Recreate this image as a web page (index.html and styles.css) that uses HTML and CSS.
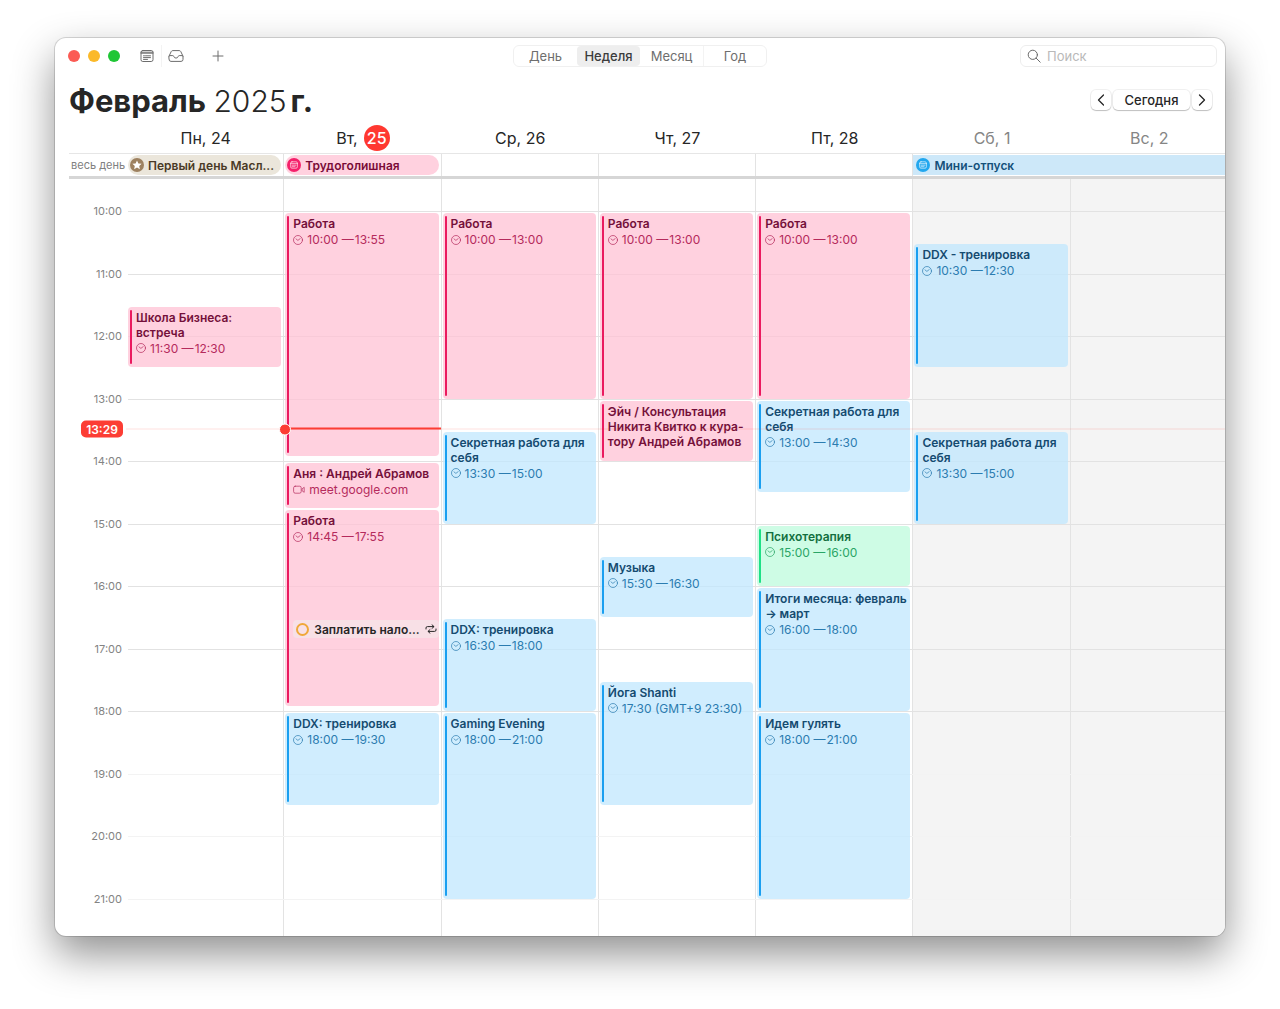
FILE: index.html
```html
<!DOCTYPE html>
<html lang="ru">
<head>
<meta charset="utf-8">
<meta name="viewport" content="width=device-width, initial-scale=1">
<title>Календарь</title>
<link rel="stylesheet" href="styles.css">
</head>
<body>
<svg class="sprite" aria-hidden="true">
  <symbol id="clock" viewBox="0 0 10 10"><circle cx="5" cy="5" r="4.5"/><path d="M3 3.900l1.900 1.500 2.300-1.800"/></symbol>
  <symbol id="video" viewBox="0 0 12 10"><rect x=".6" y="1.2" width="7.6" height="7" rx="1.6"/><path d="M9.4 3.6l1.8-1.3v5l-1.8-1.3z"/></symbol>
  <symbol id="cal" viewBox="0 0 14 14"><circle cx="7" cy="7" r="7"/><rect class="ink" x="3.6" y="3.8" width="6.8" height="6.4" rx="1.4"/><path class="ink" d="M3.6 5.6h6.8M5 7.2h4M5 8.7h3"/></symbol>
</svg>
<main class="window">
  <header class="toolbar">
    <div class="left">
      <div class="lights">
        <button class="light close" aria-label="Закрыть"></button>
        <button class="light minimize" aria-label="Свернуть"></button>
        <button class="light expand" aria-label="Развернуть"></button>
      </div>
      <div class="tools">
        <button class="tool" aria-label="Календари"><svg width="14" height="14" viewBox="0 0 14 14"><rect x="1" y="1.5" width="12" height="11" rx="1.8"/><path d="M1 3.2h12M1 4.2h12M3.5 6.8h1M5.5 6.8h5M3.5 8.6h7M3.5 10.4h4"/></svg></button>
        <button class="tool" aria-label="Входящие"><svg width="16" height="14" viewBox="0 0 16 14"><path d="M1 7.2L3.2 2.6Q3.7 1.6 4.8 1.6h6.4q1.1 0 1.6 1L15 7.2v3.2q0 2-2 2H3q-2 0-2-2zM1 7.2q0-.6.8-.6h3q.7 0 .9.7.6 1.8 2.3 1.8t2.3-1.8q.2-.7.9-.7h3q.8 0 .8.6"/></svg></button>
      </div>
      <button class="tool add" aria-label="Добавить"><svg width="12" height="12" viewBox="0 0 12 12"><path d="M6 1v10M1 6h10"/></svg></button>
    </div>
    <nav class="views" aria-label="Вид">
      <button>День</button><button class="active" aria-pressed="true">Неделя</button><button>Месяц</button><button>Год</button>
    </nav>
    <div class="right">
      <label class="search">
        <svg width="14" height="14" viewBox="0 0 14 14"><circle cx="5.8" cy="5.8" r="4.6"/><path d="M9.2 9.2l4 4"/></svg>
        <input type="text" placeholder="Поиск" aria-label="Поиск">
      </label>
    </div>
  </header>

  <div class="heading">
    <h1>Февраль <span class="year">2025</span><span class="suffix">г.</span></h1>
    <div class="pager">
      <button class="step" aria-label="Назад"><svg width="8" height="12" viewBox="0 0 8 12"><path d="M6.5 1L1.5 6l5 5"/></svg></button>
      <button class="today">Сегодня</button>
      <button class="step" aria-label="Вперёд"><svg width="8" height="12" viewBox="0 0 8 12"><path d="M1.5 1l5 5-5 5"/></svg></button>
    </div>
  </div>

  <div class="week names">
    <span></span>
    <h2>Пн, 24</h2><h2>Вт, <b>25</b></h2><h2>Ср, 26</h2><h2>Чт, 27</h2><h2>Пт, 28</h2><h2 class="off">Сб, 1</h2><h2 class="off">Вс, 2</h2>
  </div>

  <div class="week allday">
    <span class="caption">весь день</span>
    <div class="cell first"><div class="pill sand"><svg width="14" height="14" viewBox="0 0 14 14"><circle cx="7" cy="7" r="7"/><path class="star" d="M7 2.4l1.4 3 3.2.4-2.4 2.2.7 3.2L7 9.6l-2.9 1.6.7-3.2-2.4-2.2 3.2-.4z"/></svg><span>Первый день Масл...</span></div></div>
    <div class="cell"><div class="pill pink"><svg width="14" height="14"><use href="#cal"/></svg><span>Трудоголишная</span></div></div>
    <div class="cell"></div><div class="cell"></div><div class="cell"></div>
    <div class="cell double"><div class="pill blue"><svg width="14" height="14"><use href="#cal"/></svg><span>Мини-отпуск</span></div></div>
  </div>

  <div class="week schedule">
    <div class="hours">
      <time style="--at:6">10:00</time><time style="--at:18">11:00</time><time style="--at:30">12:00</time><time style="--at:42">13:00</time><time style="--at:54">14:00</time><time style="--at:66">15:00</time><time style="--at:78">16:00</time><time style="--at:90">17:00</time><time style="--at:102">18:00</time><time style="--at:114">19:00</time><time style="--at:126">20:00</time><time style="--at:138">21:00</time>
    </div>
    <div class="lines">
      <i style="--at:6"></i><i style="--at:18"></i><i style="--at:30"></i><i style="--at:42"></i><i style="--at:54"></i><i style="--at:66"></i><i style="--at:78"></i><i style="--at:90"></i><i style="--at:102"></i><i class="faint" style="--at:114"></i><i class="faint" style="--at:126"></i><i class="faint" style="--at:138"></i>
    </div>

    <section class="day first">
      <article class="event pink" style="--from:24;--to:36"><h3>Школа Бизнеса: встреча</h3><p><svg class="icon"><use href="#clock"/></svg>11:30 —&#8202;12:30</p></article>
    </section>
    <section class="day">
      <article class="event pink" style="--from:6;--to:53"><h3>Работа</h3><p><svg class="icon"><use href="#clock"/></svg>10:00 —&#8202;13:55</p></article>
      <article class="event pink" style="--from:54;--to:63"><h3>Аня : Андрей Абрамов</h3><p><svg class="icon wide"><use href="#video"/></svg>meet.google.com</p></article>
      <article class="event pink" style="--from:63;--to:101"><h3>Работа</h3><p><svg class="icon"><use href="#clock"/></svg>14:45 —&#8202;17:55</p></article>
      <div class="reminder" style="--from:84;--to:88"><span class="ring"></span><span class="text">Заплатить нало...</span><svg width="12" height="10" viewBox="0 0 12 10"><path d="M1 5V4q0-1.400 1.400-1.400h6.400M7 .8l2 1.800-2 1.800M11 5v1q0 1.400-1.400 1.400H3.200M5 5.600L3 7.400l2 1.800"/></svg></div>
      <article class="event blue" style="--from:102;--to:120"><h3>DDX: тренировка</h3><p><svg class="icon"><use href="#clock"/></svg>18:00 —&#8202;19:30</p></article>
    </section>
    <section class="day">
      <article class="event pink" style="--from:6;--to:42"><h3>Работа</h3><p><svg class="icon"><use href="#clock"/></svg>10:00 —&#8202;13:00</p></article>
      <article class="event blue" style="--from:48;--to:66"><h3>Секретная работа для себя</h3><p><svg class="icon"><use href="#clock"/></svg>13:30 —&#8202;15:00</p></article>
      <article class="event blue" style="--from:84;--to:102"><h3>DDX: тренировка</h3><p><svg class="icon"><use href="#clock"/></svg>16:30 —&#8202;18:00</p></article>
      <article class="event blue" style="--from:102;--to:138"><h3>Gaming Evening</h3><p><svg class="icon"><use href="#clock"/></svg>18:00 —&#8202;21:00</p></article>
    </section>
    <section class="day">
      <article class="event pink" style="--from:6;--to:42"><h3>Работа</h3><p><svg class="icon"><use href="#clock"/></svg>10:00 —&#8202;13:00</p></article>
      <article class="event pink" style="--from:42;--to:54"><h3>Эйч / Консультация Никита Квитко к кура-<br>тору Андрей Абрамов</h3></article>
      <article class="event blue" style="--from:72;--to:84"><h3>Музыка</h3><p><svg class="icon"><use href="#clock"/></svg>15:30 —&#8202;16:30</p></article>
      <article class="event blue" style="--from:96;--to:120"><h3>Йога Shanti</h3><p><svg class="icon"><use href="#clock"/></svg>17:30 (GMT+9 23:30)</p></article>
    </section>
    <section class="day">
      <article class="event pink" style="--from:6;--to:42"><h3>Работа</h3><p><svg class="icon"><use href="#clock"/></svg>10:00 —&#8202;13:00</p></article>
      <article class="event blue" style="--from:42;--to:60"><h3>Секретная работа для себя</h3><p><svg class="icon"><use href="#clock"/></svg>13:00 —&#8202;14:30</p></article>
      <article class="event green" style="--from:66;--to:78"><h3>Психотерапия</h3><p><svg class="icon"><use href="#clock"/></svg>15:00 —&#8202;16:00</p></article>
      <article class="event blue" style="--from:78;--to:102"><h3>Итоги месяца: февраль → март</h3><p><svg class="icon"><use href="#clock"/></svg>16:00 —&#8202;18:00</p></article>
      <article class="event blue" style="--from:102;--to:138"><h3>Идем гулять</h3><p><svg class="icon"><use href="#clock"/></svg>18:00 —&#8202;21:00</p></article>
    </section>
    <section class="day weekend">
      <article class="event blue" style="--from:12;--to:36"><h3>DDX - тренировка</h3><p><svg class="icon"><use href="#clock"/></svg>10:30 —&#8202;12:30</p></article>
      <article class="event blue" style="--from:48;--to:66"><h3>Секретная работа для себя</h3><p><svg class="icon"><use href="#clock"/></svg>13:30 —&#8202;15:00</p></article>
    </section>
    <section class="day weekend"></section>

    <div class="week now" style="top:33%"><time>13:29</time><span class="marker"></span></div>
  </div>
</main>
</body>
</html>
```
FILE: styles.css
```css
* { box-sizing: border-box; }

body {
  margin: 0;
  min-height: 100vh;
  display: flex;
  padding: 38px 55px 73px;
  background: #fff;
  color: #262626;
  font-family: Inter, "Liberation Sans", sans-serif;
}

h1, h2, h3, p { margin: 0; }

button, input {
  font: inherit;
  color: inherit;
  background: none;
  border: 0;
  padding: 0;
}

svg {
  flex: none;
  fill: none;
  stroke: currentColor;
  stroke-linecap: round;
  stroke-linejoin: round;
}

.sprite { position: absolute; width: 0; height: 0; }

.window {
  flex: 1;
  min-width: 0;
  display: flex;
  flex-direction: column;
  overflow: hidden;
  border-radius: 11px;
  background: #fff;
  box-shadow: 0 0 0 1px rgba(0, 0, 0, .14), 0 18px 42px rgba(0, 0, 0, .44);
}

/* toolbar */
.toolbar {
  display: grid;
  grid-template-columns: 1fr auto 1fr;
  align-items: center;
  height: 36px;
  padding: 0 8px;
}

.left, .lights, .tools { display: flex; align-items: center; }
.left { padding-left: 5px; }
.lights { gap: 8px; }

.light { width: 12px; height: 12px; border-radius: 50%; }
.close { background: #fb5b54; }
.minimize { background: #fbb929; }
.expand { background: #1fc635; }

.tools { margin-left: 12px; }
.tool { width: 29px; height: 22px; display: grid; place-items: center; color: #6d6d6d; }
.tool + .tool { border-left: 1px solid #f3f3f3; }
.add { margin-left: 13px; }

.views {
  display: grid;
  grid-template-columns: repeat(4, 1fr);
  width: 254px;
  height: 22px;
  border: 1px solid #f0f0f0;
  border-radius: 6px;
  font-size: 13px;
  line-height: 20px;
  color: #6e6e6e;
}
.views .active { background: #eee; color: #3c3c3c; font-weight: 500; border-radius: 4px; }
.views button:last-child { border-left: 1px solid #f3f3f3; }

.right { display: flex; justify-content: flex-end; }

.search {
  display: flex;
  align-items: center;
  gap: 6px;
  width: 197px;
  height: 22px;
  padding: 0 6px;
  border: 1px solid #ededed;
  border-radius: 6px;
  color: #6a6a6a;
}
.search input { flex: 1; min-width: 0; outline: 0; font-size: 13px; line-height: 20px; }
.search input::placeholder { color: #b9b9b9; opacity: 1; }

/* month heading */
.heading {
  display: flex;
  justify-content: space-between;
  align-items: center;
  height: 49px;
  padding: 5px 13px 0 14px;
}
h1 { font-size: 31px; line-height: 40px; font-weight: 700; }
.year { font-size: 30px; font-weight: 300; }
.suffix { margin-left: 4px; }

.pager { display: flex; gap: 2px; margin-bottom: 2px; font-size: 13px; font-weight: 500; line-height: 20px; }
.pager button {
  height: 20px;
  border-radius: 5px;
  background: #fff;
  box-shadow: 0 0 0 1px rgba(0, 0, 0, .06), 0 1px 1px rgba(0, 0, 0, .2);
}
.step { width: 20px; display: grid; place-items: center; }
.step svg { stroke-width: 1.3; }
.today { width: 77px; }

/* week layout: gutter and seven days */
.week {
  display: grid;
  grid-template-columns: 71px repeat(7, minmax(0, 1fr));
  margin-right: -2px;
}

.names { height: 30px; padding-bottom: 1px; }
h2 {
  display: flex;
  justify-content: center;
  align-items: center;
  gap: 6px;
  padding-left: 2px;
  font-size: 16px;
  font-weight: 400;
}
h2 b {
  width: 26px;
  line-height: 26px;
  border-radius: 50%;
  background: #ff3830;
  color: #fff;
  font-weight: 500;
  text-align: center;
}
.off { color: #858585; }

.allday {
  height: 26px;
  border-bottom: 3px solid #d6d6d6;
  border-top: 1px solid #e6e6e6;
  margin-left: 14px;
  grid-template-columns: 57px repeat(7, minmax(0, 1fr));
}
.caption { color: #808080; font-size: 11px; line-height: 22px; padding-left: 2px; white-space: nowrap; }
.cell { padding: 1px 2px 1px 1px; border-left: 1px solid #e3e3e3; }
.cell.first { border-color: transparent; }
.double { grid-column: span 2; padding: 1px 0; }

.pill {
  display: flex;
  align-items: center;
  gap: 4px;
  height: 20px;
  padding: 0 2px;
  border-radius: 10px;
  font-size: 12px;
  font-weight: 600;
  white-space: nowrap;
}
.pill svg { fill: currentColor; stroke: none; }
.ink { fill: none; stroke: #fff; stroke-opacity: .75; stroke-width: .8; }
.star { fill: #fff; }
.pill.sand { background: #ebe6db; color: #4a3a26; }
.pill.sand svg { color: #9d8160; }
.pill.pink { background: #ffd1df; color: #7a0b38; }
.pill.pink svg { color: #f5206b; }
.pill.blue { background: #cde8f9; color: #14507a; border-radius: 0; padding-left: 3px; }
.pill.blue svg { color: #22a7ee; }

/* time grid: one row per five minutes, 9:30 to 21:35 */
.schedule { position: relative; flex: 1; min-height: 720px; }

.hours, .lines, .day {
  display: grid;
  grid-template-rows: repeat(145, minmax(0, 1fr));
  grid-template-columns: minmax(0, 1fr);
  min-height: 0;
  padding: 1px 0;
}
.hours time {
  grid-column: 1;
  grid-row: calc(var(--at) - 1) / span 4;
  align-self: center;
  padding-right: 4px;
  text-align: right;
  font-size: 11px;
  line-height: 14px;
  color: #838383;
}

.lines { position: absolute; inset: 0 0 0 73px; z-index: 1; }
.lines i { grid-column: 1; grid-row: calc(var(--at) + 1); height: 1px; background: #e2e2e2; mix-blend-mode: multiply; }
.lines .faint { background: #f3f3f3; }

.day { border-left: 1px solid #e3e3e3; }
.day.first { border-color: transparent; }
.weekend { background: #f4f4f4; }

.event {
  position: relative;
  z-index: 2;
  grid-column: 1;
  grid-row: calc(var(--from) + 1) / calc(var(--to) + 1);
  margin: 2px 2px 0 1px;
  padding: 3px 0 0 8px;
  border-radius: 4px;
  font-size: 12px;
  overflow: hidden;
}
.event::before {
  content: "";
  position: absolute;
  inset: 3px auto 3px 2px;
  width: 2px;
  border-radius: 1px;
  background: var(--accent);
}
.event h3 { font-size: 12px; line-height: 15px; font-weight: 600; }
.event p { display: flex; align-items: center; gap: 4px; line-height: 17px; color: var(--soft); white-space: nowrap; }
.icon { width: 10px; height: 10px; stroke-width: .7; }
.icon.wide { width: 12px; }

.event.pink { --accent: #ea1a5f; --soft: #b52a5c; background: rgba(255, 194, 212, .75); color: #74103a; }
.event.blue { --accent: #1a9ff0; --soft: #2b7cb0; background: rgba(192, 231, 254, .75); color: #154b70; }
.event.green { --accent: #1ee085; --soft: #2aa566; background: rgba(189, 251, 220, .75); color: #136f3f; }

.reminder {
  z-index: 3;
  grid-column: 1;
  grid-row: calc(var(--from) + 1) / calc(var(--to) + 1);
  display: flex;
  align-items: center;
  gap: 5px;
  margin: 3px 2px 0 9px;
  padding: 0 4px 0 3px;
  border-radius: 4px;
  background: #f8e0e6;
  font-size: 12px;
  font-weight: 600;
}
.reminder .text { flex: 1; white-space: nowrap; }
.ring { flex: none; width: 13px; height: 13px; border: 2px solid #f0a83a; border-radius: 50%; }

/* current time */
.now { position: absolute; left: 0; right: 0; transform: translateY(-50%); align-items: center; z-index: 4; }
.now::before { content: ""; position: absolute; left: 71px; right: 0; top: 8px; height: 1px; background: rgba(255, 59, 48, .15); }
.now time {
  justify-self: end;
  width: 42px;
  margin-right: 3px;
  border-radius: 5px;
  background: #fc3d34;
  color: #fff;
  font-size: 12px;
  font-weight: 600;
  line-height: 17px;
  text-align: center;
}
.marker { position: relative; grid-column: 3; height: 2px; background: #fc3d34; }
.marker::before {
  content: "";
  position: absolute;
  left: -5px;
  top: -4px;
  width: 10px;
  height: 10px;
  border: 1px solid #fff;
  border-radius: 50%;
  background: #fc3d34;
}
```
